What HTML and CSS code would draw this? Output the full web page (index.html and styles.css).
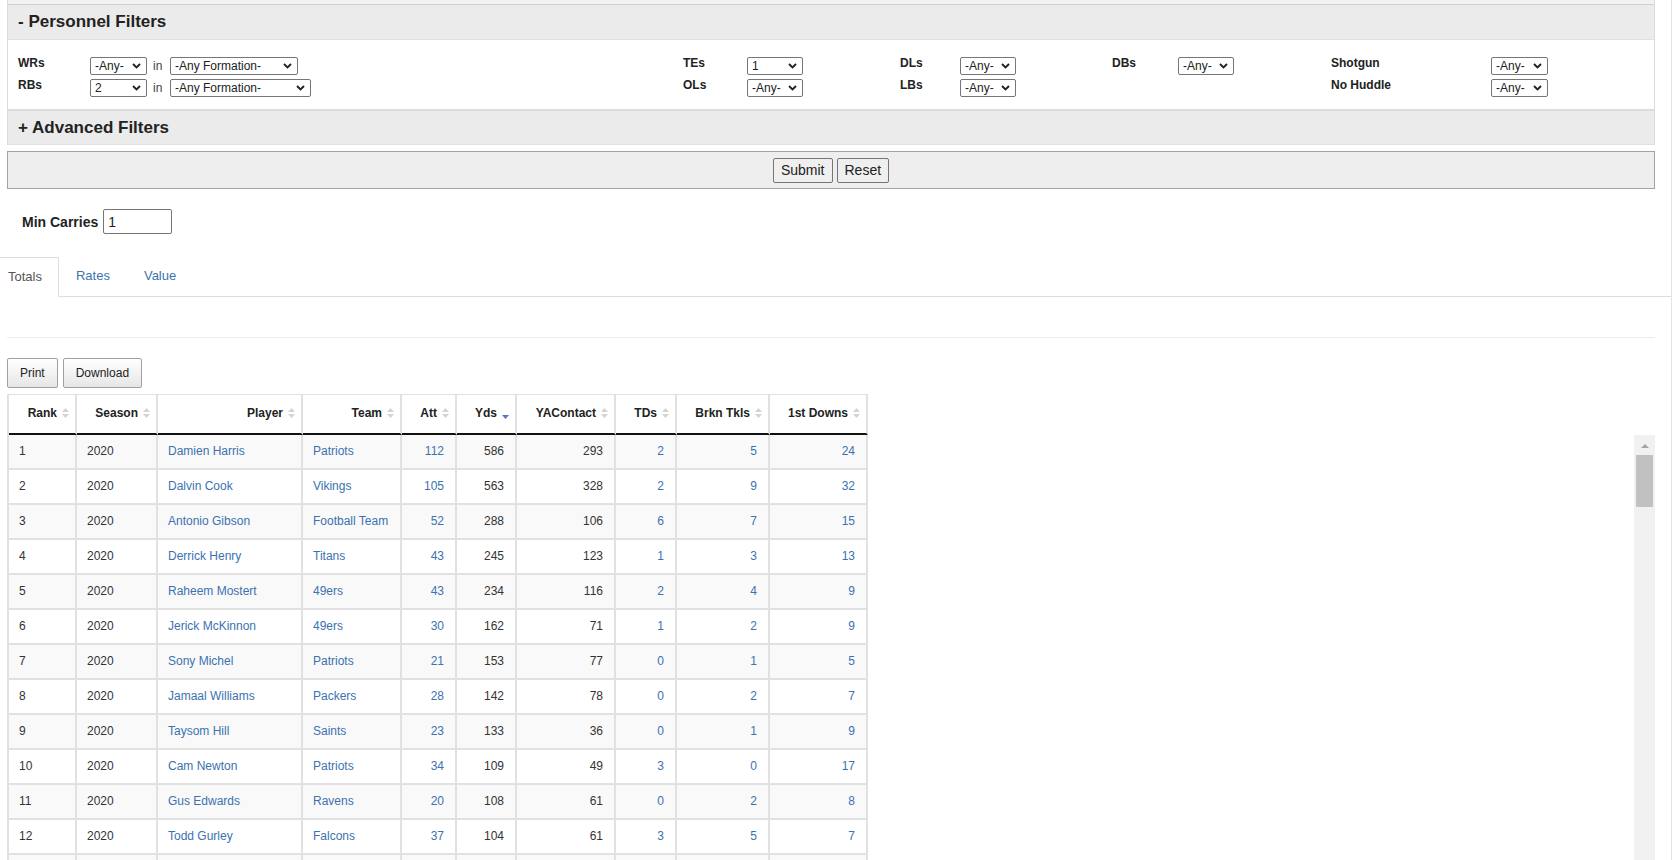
FILE: index.html
```html
<!DOCTYPE html>
<html lang="en">
<head>
<meta charset="utf-8">
<title>Rushing Stats</title>
<link rel="stylesheet" href="styles.css">
</head>
<body>
<div class="page">
  <div class="filters">
    <div class="prev"></div>
    <div class="sec-head">- Personnel Filters</div>
    <div class="sec-body">
      <div class="lbl">WRs</div>
      <div class="cell"><span class="sel"><select class="s57"><option>-Any-</option></select><svg class="chev" width="9" height="6" viewBox="0 0 9 6"><path d="M1 1 L4.5 4.5 L8 1" fill="none" stroke="#222" stroke-width="1.9"/></svg></span></div>
      <div class="in">in</div>
      <div class="cell"><span class="sel"><select class="s128"><option>-Any Formation-</option></select><svg class="chev" width="9" height="6" viewBox="0 0 9 6"><path d="M1 1 L4.5 4.5 L8 1" fill="none" stroke="#222" stroke-width="1.9"/></svg></span></div>
      <div class="lbl">TEs</div>
      <div class="cell"><span class="sel"><select class="s56"><option>1</option></select><svg class="chev" width="9" height="6" viewBox="0 0 9 6"><path d="M1 1 L4.5 4.5 L8 1" fill="none" stroke="#222" stroke-width="1.9"/></svg></span></div>
      <div class="lbl">DLs</div>
      <div class="cell"><span class="sel"><select class="s56"><option>-Any-</option></select><svg class="chev" width="9" height="6" viewBox="0 0 9 6"><path d="M1 1 L4.5 4.5 L8 1" fill="none" stroke="#222" stroke-width="1.9"/></svg></span></div>
      <div class="lbl">DBs</div>
      <div class="cell"><span class="sel"><select class="s56"><option>-Any-</option></select><svg class="chev" width="9" height="6" viewBox="0 0 9 6"><path d="M1 1 L4.5 4.5 L8 1" fill="none" stroke="#222" stroke-width="1.9"/></svg></span></div>
      <div class="lbl">Shotgun</div>
      <div class="cell"><span class="sel"><select class="s57"><option>-Any-</option></select><svg class="chev" width="9" height="6" viewBox="0 0 9 6"><path d="M1 1 L4.5 4.5 L8 1" fill="none" stroke="#222" stroke-width="1.9"/></svg></span></div>

      <div class="lbl">RBs</div>
      <div class="cell"><span class="sel"><select class="s57"><option>2</option></select><svg class="chev" width="9" height="6" viewBox="0 0 9 6"><path d="M1 1 L4.5 4.5 L8 1" fill="none" stroke="#222" stroke-width="1.9"/></svg></span></div>
      <div class="in">in</div>
      <div class="cell"><span class="sel"><select class="s141"><option>-Any Formation-</option></select><svg class="chev" width="9" height="6" viewBox="0 0 9 6"><path d="M1 1 L4.5 4.5 L8 1" fill="none" stroke="#222" stroke-width="1.9"/></svg></span></div>
      <div class="lbl">OLs</div>
      <div class="cell"><span class="sel"><select class="s56"><option>-Any-</option></select><svg class="chev" width="9" height="6" viewBox="0 0 9 6"><path d="M1 1 L4.5 4.5 L8 1" fill="none" stroke="#222" stroke-width="1.9"/></svg></span></div>
      <div class="lbl">LBs</div>
      <div class="cell"><span class="sel"><select class="s56"><option>-Any-</option></select><svg class="chev" width="9" height="6" viewBox="0 0 9 6"><path d="M1 1 L4.5 4.5 L8 1" fill="none" stroke="#222" stroke-width="1.9"/></svg></span></div>
      <div class="lbl"></div>
      <div class="cell"></div>
      <div class="lbl">No Huddle</div>
      <div class="cell"><span class="sel"><select class="s57"><option>-Any-</option></select><svg class="chev" width="9" height="6" viewBox="0 0 9 6"><path d="M1 1 L4.5 4.5 L8 1" fill="none" stroke="#222" stroke-width="1.9"/></svg></span></div>
    </div>
    <div class="sec-head adv">+ Advanced Filters</div>
  </div>

  <div class="submit-bar">
    <button class="btn">Submit</button>
    <button class="btn">Reset</button>
  </div>

  <div class="min-row">
    <label class="min-label">Min Carries</label>
    <input class="min-input" type="text" value="1">
  </div>

  <ul class="tabs">
    <li class="tab active">Totals</li>
    <li class="tab"><a href="#">Rates</a></li>
    <li class="tab"><a href="#">Value</a></li>
  </ul>

  <div class="sep"></div>

  <div class="dt-buttons">
    <button class="dt-btn">Print</button>
    <button class="dt-btn">Download</button>
  </div>

  <div class="dt">
    <div class="dt-head">
      <table class="grid">
        <colgroup>
          <col class="c1"><col class="c2"><col class="c3"><col class="c4"><col class="c5">
          <col class="c6"><col class="c7"><col class="c8"><col class="c9"><col class="c10">
        </colgroup>
        <thead>
          <tr>
            <th>Rank<span class="sort"><svg width="7" height="12" viewBox="0 0 7 12"><path d="M0 5 L3.5 1 L7 5 Z" fill="#d3d3d3"/><path d="M0 7 L7 7 L3.5 11 Z" fill="#d3d3d3"/></svg></span></th>
            <th>Season<span class="sort"><svg width="7" height="12" viewBox="0 0 7 12"><path d="M0 5 L3.5 1 L7 5 Z" fill="#d3d3d3"/><path d="M0 7 L7 7 L3.5 11 Z" fill="#d3d3d3"/></svg></span></th>
            <th>Player<span class="sort"><svg width="7" height="12" viewBox="0 0 7 12"><path d="M0 5 L3.5 1 L7 5 Z" fill="#d3d3d3"/><path d="M0 7 L7 7 L3.5 11 Z" fill="#d3d3d3"/></svg></span></th>
            <th>Team<span class="sort"><svg width="7" height="12" viewBox="0 0 7 12"><path d="M0 5 L3.5 1 L7 5 Z" fill="#d3d3d3"/><path d="M0 7 L7 7 L3.5 11 Z" fill="#d3d3d3"/></svg></span></th>
            <th>Att<span class="sort"><svg width="7" height="12" viewBox="0 0 7 12"><path d="M0 5 L3.5 1 L7 5 Z" fill="#d3d3d3"/><path d="M0 7 L7 7 L3.5 11 Z" fill="#d3d3d3"/></svg></span></th>
            <th>Yds<span class="sort"><svg width="7" height="12" viewBox="0 0 7 12"><path d="M0 8 L7 8 L3.5 12 Z" fill="#5d6fcf"/></svg></span></th>
            <th>YAContact<span class="sort"><svg width="7" height="12" viewBox="0 0 7 12"><path d="M0 5 L3.5 1 L7 5 Z" fill="#d3d3d3"/><path d="M0 7 L7 7 L3.5 11 Z" fill="#d3d3d3"/></svg></span></th>
            <th>TDs<span class="sort"><svg width="7" height="12" viewBox="0 0 7 12"><path d="M0 5 L3.5 1 L7 5 Z" fill="#d3d3d3"/><path d="M0 7 L7 7 L3.5 11 Z" fill="#d3d3d3"/></svg></span></th>
            <th>Brkn Tkls<span class="sort"><svg width="7" height="12" viewBox="0 0 7 12"><path d="M0 5 L3.5 1 L7 5 Z" fill="#d3d3d3"/><path d="M0 7 L7 7 L3.5 11 Z" fill="#d3d3d3"/></svg></span></th>
            <th>1st Downs<span class="sort"><svg width="7" height="12" viewBox="0 0 7 12"><path d="M0 5 L3.5 1 L7 5 Z" fill="#d3d3d3"/><path d="M0 7 L7 7 L3.5 11 Z" fill="#d3d3d3"/></svg></span></th>
          </tr>
        </thead>
      </table>
    </div>
    <div class="dt-body">
      <div class="dt-body-inner">
        <table class="grid">
          <colgroup>
            <col class="c1"><col class="c2"><col class="c3"><col class="c4"><col class="c5">
            <col class="c6"><col class="c7"><col class="c8"><col class="c9"><col class="c10">
          </colgroup>
          <tbody>
            <tr><td>1</td><td>2020</td><td><a href="#">Damien Harris</a></td><td><a href="#">Patriots</a></td><td class="r"><a href="#">112</a></td><td class="r">586</td><td class="r">293</td><td class="r"><a href="#">2</a></td><td class="r"><a href="#">5</a></td><td class="r"><a href="#">24</a></td></tr>
            <tr><td>2</td><td>2020</td><td><a href="#">Dalvin Cook</a></td><td><a href="#">Vikings</a></td><td class="r"><a href="#">105</a></td><td class="r">563</td><td class="r">328</td><td class="r"><a href="#">2</a></td><td class="r"><a href="#">9</a></td><td class="r"><a href="#">32</a></td></tr>
            <tr><td>3</td><td>2020</td><td><a href="#">Antonio Gibson</a></td><td><a href="#">Football Team</a></td><td class="r"><a href="#">52</a></td><td class="r">288</td><td class="r">106</td><td class="r"><a href="#">6</a></td><td class="r"><a href="#">7</a></td><td class="r"><a href="#">15</a></td></tr>
            <tr><td>4</td><td>2020</td><td><a href="#">Derrick Henry</a></td><td><a href="#">Titans</a></td><td class="r"><a href="#">43</a></td><td class="r">245</td><td class="r">123</td><td class="r"><a href="#">1</a></td><td class="r"><a href="#">3</a></td><td class="r"><a href="#">13</a></td></tr>
            <tr><td>5</td><td>2020</td><td><a href="#">Raheem Mostert</a></td><td><a href="#">49ers</a></td><td class="r"><a href="#">43</a></td><td class="r">234</td><td class="r">116</td><td class="r"><a href="#">2</a></td><td class="r"><a href="#">4</a></td><td class="r"><a href="#">9</a></td></tr>
            <tr><td>6</td><td>2020</td><td><a href="#">Jerick McKinnon</a></td><td><a href="#">49ers</a></td><td class="r"><a href="#">30</a></td><td class="r">162</td><td class="r">71</td><td class="r"><a href="#">1</a></td><td class="r"><a href="#">2</a></td><td class="r"><a href="#">9</a></td></tr>
            <tr><td>7</td><td>2020</td><td><a href="#">Sony Michel</a></td><td><a href="#">Patriots</a></td><td class="r"><a href="#">21</a></td><td class="r">153</td><td class="r">77</td><td class="r"><a href="#">0</a></td><td class="r"><a href="#">1</a></td><td class="r"><a href="#">5</a></td></tr>
            <tr><td>8</td><td>2020</td><td><a href="#">Jamaal Williams</a></td><td><a href="#">Packers</a></td><td class="r"><a href="#">28</a></td><td class="r">142</td><td class="r">78</td><td class="r"><a href="#">0</a></td><td class="r"><a href="#">2</a></td><td class="r"><a href="#">7</a></td></tr>
            <tr><td>9</td><td>2020</td><td><a href="#">Taysom Hill</a></td><td><a href="#">Saints</a></td><td class="r"><a href="#">23</a></td><td class="r">133</td><td class="r">36</td><td class="r"><a href="#">0</a></td><td class="r"><a href="#">1</a></td><td class="r"><a href="#">9</a></td></tr>
            <tr><td>10</td><td>2020</td><td><a href="#">Cam Newton</a></td><td><a href="#">Patriots</a></td><td class="r"><a href="#">34</a></td><td class="r">109</td><td class="r">49</td><td class="r"><a href="#">3</a></td><td class="r"><a href="#">0</a></td><td class="r"><a href="#">17</a></td></tr>
            <tr><td>11</td><td>2020</td><td><a href="#">Gus Edwards</a></td><td><a href="#">Ravens</a></td><td class="r"><a href="#">20</a></td><td class="r">108</td><td class="r">61</td><td class="r"><a href="#">0</a></td><td class="r"><a href="#">2</a></td><td class="r"><a href="#">8</a></td></tr>
            <tr><td>12</td><td>2020</td><td><a href="#">Todd Gurley</a></td><td><a href="#">Falcons</a></td><td class="r"><a href="#">37</a></td><td class="r">104</td><td class="r">61</td><td class="r"><a href="#">3</a></td><td class="r"><a href="#">5</a></td><td class="r"><a href="#">7</a></td></tr>
            <tr><td>&nbsp;</td><td>&nbsp;</td><td>&nbsp;</td><td>&nbsp;</td><td class="r">&nbsp;</td><td class="r">&nbsp;</td><td class="r">&nbsp;</td><td class="r">&nbsp;</td><td class="r">&nbsp;</td><td class="r">&nbsp;</td></tr>
          </tbody>
        </table>
      </div>
      <div class="vscroll">
        <div class="vs-up"></div>
        <div class="vs-thumb"></div>
      </div>
    </div>
  </div>
</div>
</body>
</html>
```

FILE: styles.css
```css
* { box-sizing: border-box; }

html, body {
  margin: 0;
  padding: 0;
  height: 100%;
  overflow: hidden;
}

body {
  font-family: "Liberation Sans", Arial, sans-serif;
  font-size: 12px;
  color: #333;
  background: #fff;
}

.page {
  width: 1672px;
  height: 860px;
  border-right: 1px solid #e4e4e4;
}

/* ---------- filter panel ---------- */
.filters {
  margin: 0 16px 0 7px;
  border-left: 1px solid #dcdcdc;
  border-right: 1px solid #dcdcdc;
}

.prev {
  height: 5px;
  background: #f2f2f2;
  border-bottom: 1px solid #d2d2d2;
}

.sec-head {
  height: 34px;
  line-height: 34px;
  padding-left: 10px;
  background: #ebebeb;
  font-size: 17px;
  font-weight: bold;
  color: #222;
}

.sec-head.adv {
  border-bottom: 1px solid #e2e2e2;
}

.sec-body {
  display: grid;
  grid-template-columns: 72px 60px 20px 513px 64px 153px 60px 152px 66px 153px 160px auto;
  grid-template-rows: 18px 18px;
  row-gap: 4px;
  padding: 17px 10px 12px;
  border-top: 1px solid #e0e0e0;
  border-bottom: 2px solid #dcdcdc;
  background: #fff;
}

.lbl {
  font-weight: bold;
  font-size: 12px;
  line-height: 14px;
  margin-top: -1px;
  color: #222;
}

.in {
  font-size: 12px;
  line-height: 18px;
  padding-left: 3px;
  color: #444;
}

.cell {
  display: flex;
  align-items: center;
}

.sel {
  position: relative;
  display: inline-block;
  height: 18px;
}

.chev {
  position: absolute;
  right: 6px;
  top: 6px;
  pointer-events: none;
}

select {
  -webkit-appearance: none;
  appearance: none;
  display: block;
  height: 18px;
  font-family: "Liberation Sans", Arial, sans-serif;
  font-size: 12px;
  line-height: 16px;
  color: #222;
  background: #fff;
  border: 1px solid #767676;
  border-radius: 2px;
  padding: 0 16px 0 4px;
}

.s56 { width: 56px; }
.s57 { width: 57px; }
.s128 { width: 128px; }
.s141 { width: 141px; }

/* ---------- submit bar ---------- */
.submit-bar {
  margin: 6px 16px 0 7px;
  height: 38px;
  border: 1px solid #a2a2a2;
  background: #eeeeee;
  display: flex;
  justify-content: center;
  align-items: center;
  gap: 4px;
}

.btn {
  height: 25px;
  padding: 0 7px;
  font-family: "Liberation Sans", Arial, sans-serif;
  font-size: 14px;
  color: #222;
  background: #efefef;
  border: 1px solid #767676;
  border-radius: 2px;
}

/* ---------- min carries ---------- */
.min-row {
  margin: 20px 0 0 22px;
  display: flex;
  align-items: center;
  gap: 5px;
  height: 25px;
}

.min-label {
  font-size: 14px;
  font-weight: bold;
  color: #222;
}

.min-input {
  width: 69px;
  height: 25px;
  padding: 1px 4px;
  font-family: "Liberation Sans", Arial, sans-serif;
  font-size: 14px;
  color: #222;
  border: 1px solid #767676;
  border-radius: 2px;
}

/* ---------- tabs ---------- */
.tabs {
  list-style: none;
  margin: 23px 0 0 0;
  padding: 0;
  height: 40px;
  display: flex;
  align-items: flex-start;
  border-bottom: 1px solid #dddddd;
}

.tab {
  height: 40px;
  line-height: 38px;
  font-size: 13px;
  padding: 0 17px;
}

.tab a {
  color: #3c72b0;
  text-decoration: none;
}

.tab.active {
  padding: 0 16px 0 8px;
  color: #555;
  background: #fff;
  border-top: 1px solid #dddddd;
  border-right: 1px solid #dddddd;
  border-bottom: 1px solid #fff;
}

.sep {
  margin: 40px 16px 0 7px;
  border-top: 1px solid #ededed;
}

/* ---------- datatable buttons ---------- */
.dt-buttons {
  margin: 20px 0 0 7px;
  display: flex;
  gap: 5px;
}

.dt-btn {
  height: 30px;
  padding: 0 12px;
  font-family: "Liberation Sans", Arial, sans-serif;
  font-size: 12px;
  color: #222;
  background: linear-gradient(#ffffff, #e6e6e6);
  border: 1px solid #a0a0a0;
  border-radius: 2px;
}

/* ---------- table ---------- */
.dt {
  margin: 6px 16px 0 7px;
}

.grid {
  width: 861px;
  table-layout: fixed;
  border-collapse: separate;
  border-spacing: 0;
  border-left: 2px solid #e1e1e1;
}

.c1 { width: 68px; }
.c2 { width: 81px; }
.c3 { width: 145px; }
.c4 { width: 99px; }
.c5 { width: 55px; }
.c6 { width: 60px; }
.c7 { width: 99px; }
.c8 { width: 61px; }
.c9 { width: 93px; }
.c10 { width: 98px; }

.grid th {
  text-align: right;
  font-weight: bold;
  font-size: 12px;
  color: #222;
  line-height: 36px;
  padding: 0 6px 2px 4px;
  white-space: nowrap;
  border-top: 1px solid #e1e1e1;
  border-right: 2px solid #e1e1e1;
  border-bottom: 2px solid #111;
  background: #fff;
}

.sort {
  display: inline-block;
  width: 7px;
  height: 12px;
  margin-left: 5px;
  vertical-align: -2px;
}

.sort svg { display: block; }

.dt-body {
  display: flex;
  justify-content: space-between;
  align-items: flex-start;
}

.grid td {
  font-size: 12px;
  line-height: 33px;
  padding: 0 10px;
  white-space: nowrap;
  color: #333;
  border-right: 2px solid #e1e1e1;
  border-bottom: 2px solid #e1e1e1;
}

.grid tbody tr:nth-child(odd) td { background: #f9f9f9; }
.grid tbody tr:nth-child(even) td { background: #ffffff; }

.grid td.r {
  text-align: right;
  padding: 0 11px 0 4px;
}

.grid td a {
  color: #3c72b0;
  text-decoration: none;
}

/* fake vertical scrollbar of the scroll body */
.vscroll {
  width: 21px;
  height: 460px;
  background: #f1f1f1;
  display: flex;
  flex-direction: column;
  align-items: center;
}

.vs-up {
  margin-top: 9px;
  width: 0;
  height: 0;
  border-left: 4px solid transparent;
  border-right: 4px solid transparent;
  border-bottom: 4px solid #a3a3a3;
}

.vs-thumb {
  margin-top: 7px;
  width: 17px;
  height: 52px;
  background: #c1c1c1;
}
```
